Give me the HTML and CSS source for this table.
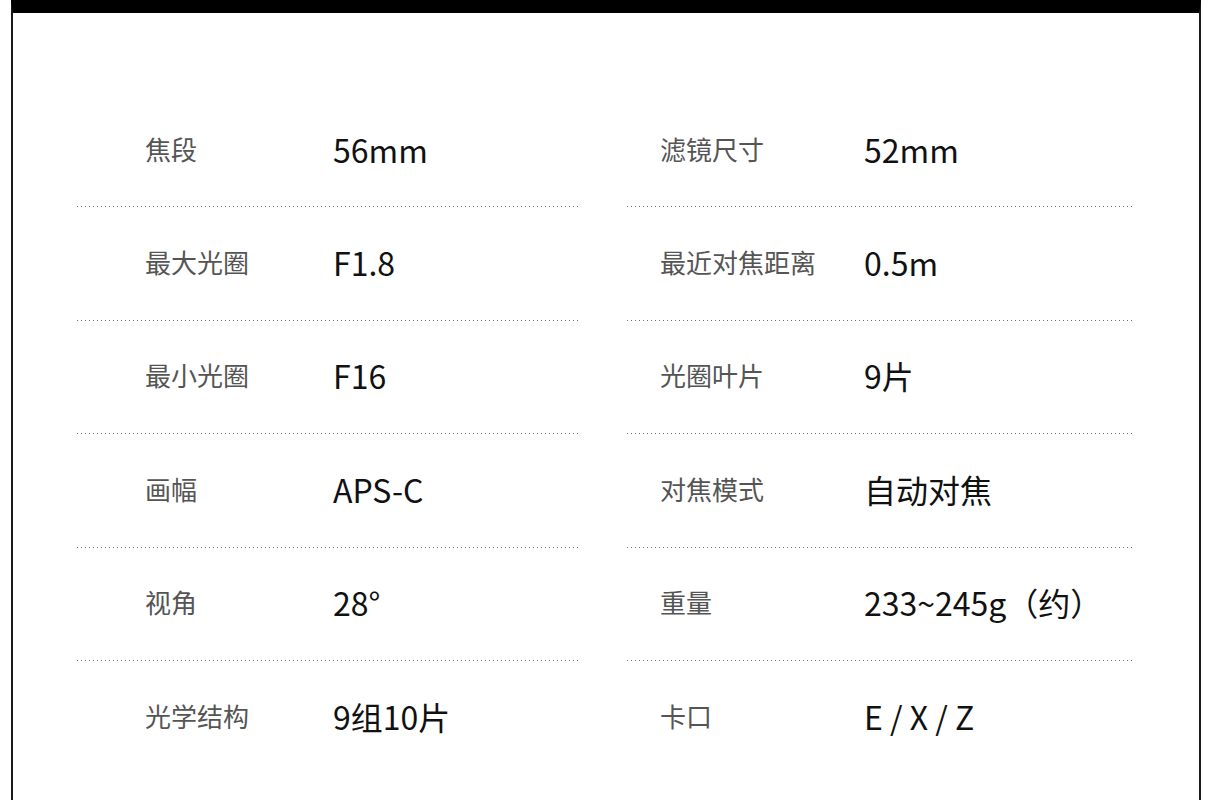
FILE: index.html
```html
<!DOCTYPE html>
<html lang="zh-CN">
<head>
<meta charset="utf-8">
<title>规格参数</title>
<link rel="stylesheet" href="styles.css">
</head>
<body>
<div class="frame">
  <div class="specs">
    <div class="col">
      <div class="row"><span class="label">焦段</span><span class="value">56mm</span></div>
      <div class="row"><span class="label">最大光圈</span><span class="value">F1.8</span></div>
      <div class="row"><span class="label">最小光圈</span><span class="value">F16</span></div>
      <div class="row"><span class="label">画幅</span><span class="value">APS-C</span></div>
      <div class="row"><span class="label">视角</span><span class="value">28°</span></div>
      <div class="row last"><span class="label">光学结构</span><span class="value">9组10片</span></div>
    </div>
    <div class="col right">
      <div class="row"><span class="label">滤镜尺寸</span><span class="value">52mm</span></div>
      <div class="row"><span class="label">最近对焦距离</span><span class="value">0.5m</span></div>
      <div class="row"><span class="label">光圈叶片</span><span class="value">9片</span></div>
      <div class="row"><span class="label">对焦模式</span><span class="value">自动对焦</span></div>
      <div class="row"><span class="label">重量</span><span class="value">233~245g（约）</span></div>
      <div class="row last"><span class="label">卡口</span><span class="value">E / X / Z</span></div>
    </div>
  </div>
</div>
</body>
</html>
```

FILE: styles.css
```css
html, body {
  margin: 0;
  padding: 0;
  background: #fff;
}

body {
  font-family: "Noto Sans CJK SC", "Noto Sans", sans-serif;
  height: 800px;
  overflow: hidden;
}

.frame {
  margin-left: 11px;
  width: 1186px;
  height: 800px;
  border-top: 13px solid #000;
  border-left: 2px solid #1a1a1a;
  border-right: 2px solid #1a1a1a;
  box-sizing: content-box;
}

.specs {
  display: grid;
  grid-template-columns: 501px 507px;
  column-gap: 49px;
  padding-left: 64px;
  padding-top: 81px;
}

.col {
  display: flex;
  flex-direction: column;
}

.row {
  height: 113.4px;
  display: flex;
  align-items: center;
  padding-left: 68px;
  padding-bottom: 4px;
  box-sizing: border-box;
  background-image: linear-gradient(to right, #6f6f6f 0 1.5px, transparent 1.5px);
  background-size: 4px 1px;
  background-repeat: repeat-x;
  background-position: 0 100%;
}

.row.last {
  background-image: none;
}

.right .row {
  padding-left: 33px;
}

.label {
  width: 188px;
  flex: none;
  font-size: 26px;
  color: #555;
  line-height: 1;
}

.right .label {
  width: 204px;
}

.value {
  font-size: 32px;
  color: #111;
  line-height: 1;
  font-weight: 400;
}
```
